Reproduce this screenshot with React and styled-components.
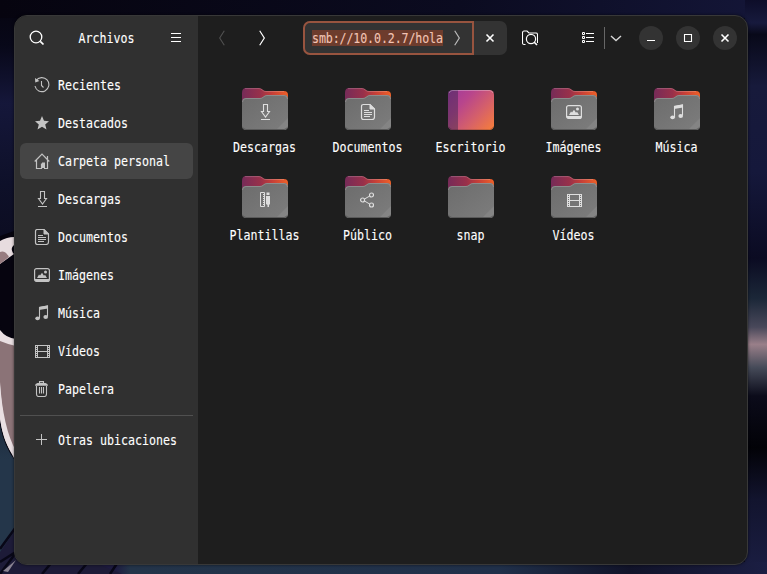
import React from "react";
import styled, { createGlobalStyle } from "styled-components";

const GlobalStyle = createGlobalStyle`
  * { box-sizing: border-box; }
  html, body { margin: 0; height: 100%; overflow: hidden; background: #0b0c20; }
  body, button, input {
    font-family: "DejaVu Sans Mono", "Liberation Mono", monospace;
    font-size: 11.63px;
    color: #fff;
  }
`;

const Desktop = styled.div`
  position: relative;
  width: 767px;
  height: 574px;
  padding: 15px 19px 9px 14px;
  overflow: hidden;
`;

const WallpaperArt = styled.svg`
  position: absolute;
  inset: 0;
  z-index: 0;
`;

const Window = styled.main`
  position: relative;
  z-index: 1;
  display: flex;
  width: 734px;
  height: 550px;
  border: 1px solid #383838;
  border-radius: 13px;
  overflow: hidden;
  background: #1e1e1e;
  box-shadow: 0 0 3px rgba(0, 0, 0, 0.6);
`;

const Sidebar = styled.aside`
  width: 183px;
  flex: none;
  background: #303030;
  padding: 0 5px;
`;

const SidebarHeader = styled.header`
  display: grid;
  grid-template-columns: 34px 1fr 34px;
  align-items: center;
  justify-items: center;
  height: 44px;
  margin-bottom: 7px;
`;

const Text = styled.span`
  display: block;
  line-height: 16px;
  white-space: pre;
  transform: scaleY(1.18);
  color: ${(p) => p.$color || "#fff"};
  letter-spacing: ${(p) => (p.$tight ? "-0.11px" : "0")};
  -webkit-text-stroke: 0.1px currentColor;
`;

const IconButton = styled.button`
  display: flex;
  align-items: center;
  justify-content: center;
  flex: none;
  width: ${(p) => p.$width || 34}px;
  height: 34px;
  margin: 0 0 0 ${(p) => p.$before || 0}px;
  padding: 0;
  border: 0;
  background: none;
`;

const Places = styled.nav`
  display: flex;
  flex-direction: column;
  gap: 2px;
`;

const Place = styled.a`
  display: flex;
  align-items: center;
  gap: 8px;
  height: 36px;
  padding-left: 14px;
  border-radius: 6px;
  background: ${(p) => (p.$active ? "#454545" : "transparent")};
`;

const Divider = styled.hr`
  height: 1px;
  margin: 8px 0 6px;
  border: 0;
  background: #505050;
`;

const Content = styled.section`
  flex: 1;
  min-width: 0;
`;

const Toolbar = styled.header`
  display: flex;
  align-items: center;
  height: 44px;
  padding-left: 7px;
`;

const PathBar = styled.div`
  display: flex;
  width: 204px;
  height: 34px;
  margin-left: 18px;
  flex: none;
  border-radius: 7px;
  background: #333;
`;

const PathEntry = styled.div`
  display: flex;
  align-items: center;
  width: 171px;
  padding-left: 7px;
  border: 2px solid #98543f;
  border-radius: 7px 0 0 7px;
`;

const Selection = styled.div`
  display: flex;
  width: 131px;
  height: 16px;
  flex: none;
  background: #6d3c2d;
`;

const SplitLine = styled.span`
  width: 1px;
  height: 22px;
  background: #676767;
`;

const WindowControls = styled.div`
  display: flex;
  gap: 13px;
  margin-left: 12px;
`;

const Control = styled.button`
  width: 24px;
  height: 24px;
  padding: 0;
  border: 0;
  border-radius: 50%;
  background: #333;
  display: grid;
  place-items: center;
`;

const FileGrid = styled.div`
  display: grid;
  grid-template-columns: repeat(5, 103px);
  grid-auto-rows: 88px;
  padding: 28px 0 0 15px;
`;

const FileItem = styled.figure`
  display: flex;
  flex-direction: column;
  align-items: center;
  gap: 7px;
  margin: 0;
`;

const Glyph = styled.svg`
  display: block;
  flex: none;
  color: ${(p) => p.$color || "#c3c3c3"};
  fill: none;
  stroke: currentColor;
`;

const glyphs = {
  search: (
    <>
      <circle cx="7" cy="7" r="5.8" strokeWidth="1.3" />
      <path d="m11.3 11.3 3.2 3.2" strokeWidth="1.7" />
    </>
  ),
  menu: <path d="M3 3.5h10M3 7.5h10M3 11.5h10" />,
  recent: (
    <>
      <path d="M2 3.8A7 7 0 1 1 1 9M7.5 4v4.5l2 2" strokeWidth="1.1" />
      <path d="m1 1 .3 4.6L5.4 4Z" fill="currentColor" stroke="none" />
    </>
  ),
  star: <path d="m8 1 2 4.8 5 .4-3.8 3.2 1.3 5.2L8 11.8l-4.5 2.8 1.3-5.2L1 6.2l5-.4Z" fill="currentColor" stroke="none" />,
  home: (
    <>
      <path d="M.7 8.5 8 1.2l7.3 7.3M2.5 7v8.5h5v-5M13.5 7v8.5H10M13.5 6V3" strokeWidth="1.2" />
      <path d="M8 9.5h3V15H8Z" fill="currentColor" stroke="none" />
    </>
  ),
  download: <path d="M6.5 .5h4v7h2L8.5 13 4.5 7.5h2ZM4 15.5h9" strokeWidth="1.1" />,
  document: (
    <>
      <path d="M3.5.5H10L14.5 5v8q0 2.5-2.5 2.5H3.5q-2 0-2-2v-11q0-2 2-2Z" strokeWidth="1.2" />
      <path d="M10 .5V5h4.5Z" fill="currentColor" />
      <path d="M4 6.5h5M4 8.5h8M4 10.5h8M4 12.5h6" />
    </>
  ),
  image: (
    <>
      <rect x=".6" y="1.6" width="14.8" height="12.8" rx="2" strokeWidth="1.2" />
      <path d="M1 12h14v1.3q0 1.2-1.3 1.2H2.3Q1 14.5 1 13.3ZM3 11l2-3.5 1 1L8 5.8l2 3 1-1L13 11Z" fill="currentColor" stroke="none" />
      <circle cx="11.5" cy="5" r="1.5" fill="currentColor" stroke="none" />
    </>
  ),
  music: (
    <>
      <path d="M5.5 13V2.5l8-1.5v10.5" strokeWidth="1.1" />
      <path d="M5 2 14 .5v3L5 5Z" fill="currentColor" stroke="none" />
      <ellipse cx="3.6" cy="13.3" rx="2.3" ry="1.9" fill="currentColor" stroke="none" />
      <ellipse cx="11.7" cy="12" rx="2.3" ry="1.9" fill="currentColor" stroke="none" />
    </>
  ),
  video: (
    <>
      <path d="M3.5 2v13M13.5 2v13M1 2.5h15M3 8.5h11M1 14.5h15" />
      <path d="M1.5 2v13M15.5 2v13" />
      <path d="M2.5 4v10M14.5 4v10" strokeDasharray="1 1" />
    </>
  ),
  trash: (
    <>
      <path d="M2.5 5v8q0 2.5 2 2.5h6q2 0 2-2.5V5M5.5 6v6.5M7.5 6v6.5M9.5 6v6.5M5.5 2V.6h4V2" strokeWidth="1.1" />
      <path d="M1 4.8Q1 2.8 3.5 2h8Q14 2.8 14 4.8Z" fill="currentColor" stroke="none" />
    </>
  ),
  plus: <path d="M2 7.5h11M7.5 2v11" />,
  back: <path d="m10.3 .7-4.6 7.3 4.6 7.3" strokeWidth="1.1" />,
  forward: <path d="m5.7 .7 4.6 7.3-4.6 7.3" strokeWidth="1.2" />,
  close: <path d="m4.5 4.5 7 7m0-7-7 7" strokeWidth="1.6" />,
  folderSearch: (
    <>
      <path d="M3.5 14.5H2Q.5 14.5.5 13V3q0-2 1.5-2h3l2 2H14q1.5 0 1.5 1.5V13" strokeWidth="1.1" />
      <circle cx="9" cy="9" r="4.6" strokeWidth="1.2" />
      <path d="m12 12 3 3" strokeWidth="1.6" />
    </>
  ),
  list: (
    <>
      <path d="M2.5 2.5h2v2h-2ZM2.5 6.5h2v2h-2ZM2.5 10.5h2v2h-2Z" />
      <path d="M6 3.5h8M6 7.5h8M6 11.5h8" />
    </>
  ),
  down: <path d="m3 6 5 4.5L13 6" strokeWidth="1.4" />,
  minimize: <path d="M4 10.5h8" />,
  maximize: <path d="M4.5 4.5h7v7h-7Z" strokeWidth="1.1" />,
  template: (
    <>
      <path d="M3.5.5h4v14h-4Z" />
      <path d="M6 2.5h1M6 4.5h1M6 6.5h1M6 8.5h1M6 10.5h1M6 12.5h1" />
      <path d="M9 4h4v8l-1 1v2h-1.5v-2L9 12ZM9.5.5h3V3h-3Z" fill="currentColor" stroke="none" />
    </>
  ),
  share: (
    <>
      <circle cx="2.6" cy="8" r="2" strokeWidth="1.2" />
      <circle cx="11.5" cy="3" r="2" strokeWidth="1.2" />
      <circle cx="11.5" cy="13" r="2" strokeWidth="1.2" />
      <path d="m4.5 7 5.1-2.9M4.5 9l5.1 3" />
    </>
  ),
};

function Icon({ name, color }) {
  return (
    <Glyph width="16" height="16" viewBox="0 0 16 16" $color={color}>
      {glyphs[name]}
    </Glyph>
  );
}

const FolderSvg = styled.svg`
  display: block;
  color: #dedede;
`;

function Folder({ emblem }) {
  return (
    <FolderSvg width="46" height="44" viewBox="0 0 46 44" fill="none">
      <path d="M0 5q0-5 4-5h13q2 0 3.5 1.5T24 3h18q4 0 4 4v16H0Z" fill="url(#folder-back)" />
      <path d="M3 .6h14q2 0 3.5 1.5t3.5 1.4h18" stroke="#fff" strokeOpacity=".2" />
      <path d="M0 14q0-4 4-4h14q2 0 3.5-1.5T25 7h17q4 0 4 4v27q0 4-4 4H4q-4 0-4-4Z" fill="url(#folder-front)" />
      <path d="M46 30v8q0 4-4 4h-8Z" fill="#fff" fillOpacity=".07" />
      <path d="M.5 14q0-3.5 3.5-3.5h14q2 0 3.5-1.5T25 7.5h17q3.5 0 3.5 3.5" stroke="#989898" strokeOpacity=".7" />
      <path d="M1 39.5q.8 2 3 2h38q2.2 0 3-2" stroke="#5a5a5a" />
      {emblem && (
        <g transform="translate(15 16)" stroke="currentColor">
          {glyphs[emblem]}
        </g>
      )}
    </FolderSvg>
  );
}

function DesktopFolder() {
  return (
    <FolderSvg width="46" height="44" viewBox="0 0 46 44" fill="none">
      <rect y="2" width="46" height="40" rx="4.5" fill="url(#desktop-fill)" />
      <path d="M10 2H4.5Q0 2 0 6.5v31Q0 42 4.5 42H10Z" fill="#242040" fillOpacity=".4" />
      <path d="M1 5q1-2.5 3.5-2.5h37Q44 2.5 45 5" stroke="#fff" strokeOpacity=".3" />
      <path d="M1 39q1 2.5 3.5 2.5h37q2.5 0 3.5-2.5" stroke="#000" strokeOpacity=".16" />
    </FolderSvg>
  );
}

function Wallpaper() {
  return (
    <WallpaperArt width="767" height="574" viewBox="0 0 767 574">
      <defs>
        <linearGradient id="sky" x2="0" y2="1">
          <stop stopColor="#06040f" />
          <stop offset=".08" stopColor="#080819" />
          <stop offset=".18" stopColor="#15173a" />
          <stop offset=".32" stopColor="#0e1029" />
          <stop offset=".55" stopColor="#090817" />
          <stop offset=".8" stopColor="#24364a" />
          <stop offset="1" stopColor="#24364a" />
        </linearGradient>
        <linearGradient id="right-glow" x2="0" y2="1">
          <stop stopColor="#0d0d29" />
          <stop offset=".04" stopColor="#171a3d" />
          <stop offset=".06" stopColor="#080919" />
          <stop offset=".15" stopColor="#171a3b" />
          <stop offset=".3" stopColor="#15183b" />
          <stop offset=".45" stopColor="#0b0b22" />
          <stop offset=".52" stopColor="#1b2738" />
          <stop offset=".57" stopColor="#49485a" />
          <stop offset=".6" stopColor="#997f89" />
          <stop offset=".64" stopColor="#464b59" />
          <stop offset=".69" stopColor="#0b0b1a" />
          <stop offset=".78" stopColor="#020207" />
          <stop offset=".87" stopColor="#12142e" />
          <stop offset="1" stopColor="#1b1e43" />
        </linearGradient>
        <linearGradient id="ground">
          <stop stopColor="#1d1b3c" />
          <stop offset=".15" stopColor="#1e1b40" />
          <stop offset=".17" stopColor="#233449" />
          <stop offset=".65" stopColor="#20304a" />
          <stop offset=".82" stopColor="#111329" />
          <stop offset="1" stopColor="#1b1e43" />
        </linearGradient>
        <linearGradient id="top-sky">
          <stop stopColor="#06040f" />
          <stop offset=".6" stopColor="#0b0b20" />
          <stop offset="1" stopColor="#141638" />
        </linearGradient>
        <linearGradient id="folder-back">
          <stop stopColor="#762b58" />
          <stop offset=".4" stopColor="#98304a" />
          <stop offset=".65" stopColor="#c53e38" />
          <stop offset="1" stopColor="#ee6128" />
        </linearGradient>
        <linearGradient id="folder-front" x2="1" y2="1">
          <stop stopColor="#6c6c6c" />
          <stop offset="1" stopColor="#7d7d7d" />
        </linearGradient>
        <linearGradient id="desktop-fill" x1="0" y1=".1" x2="1" y2=".9">
          <stop stopColor="#a43b9a" />
          <stop offset=".3" stopColor="#b8458c" />
          <stop offset=".65" stopColor="#d5606a" />
          <stop offset="1" stopColor="#f37b3f" />
        </linearGradient>
      </defs>
      <path fill="url(#sky)" d="M0 0h300v574H0Z" />
      <path fill="url(#top-sky)" d="M0 0h767v18H0Z" />
      <path fill="url(#right-glow)" d="M745 0h22v574h-22Z" />
      <path fill="url(#ground)" d="M0 562h767v12H0Z" />
      <path fill="#06040f" d="M0 236 14 231V340L0 328Z" />
      <path fill="#e7dcdf" d="M0 241q7-4 14-4v8q-4 3-1 8l1 1-14 10Z" />
      <path fill="#977c80" d="M0 252q5-2 9 5L0 264Z" />
      <path fill="#06040f" d="M0 325q6 12 16 12v125Q4 447 0 425Z" />
      <path fill="#e9dfe2" d="M0 330q6 8 16 9v119Q3 445 0 417Z" />
      <path fill="#8b7377" d="M0 341q7 3 16 5v105Q3 428 0 382Z" />
      <path fill="#e9dfe2" d="M0 385q3 45 14 67v6Q3 440 0 419Z" />
      <path fill="#1d1b38" d="M0 552 16 529 122 574H0Z" />
      <path stroke="#080717" strokeWidth="2.5" d="m0 549 16-22M0 562l22-14M0 574l18-24M42 574l10-12M78 574l10-12M110 574l8-12" />
      <path fill="#898291" d="m3 571 13-11-8 12Z" />
    </WallpaperArt>
  );
}

const places = [
  ["recent", "Recientes"],
  ["star", "Destacados"],
  ["home", "Carpeta personal"],
  ["download", "Descargas"],
  ["document", "Documentos"],
  ["image", "Imágenes"],
  ["music", "Música"],
  ["video", "Vídeos"],
  ["trash", "Papelera"],
];

const files = [
  ["Descargas", "download"],
  ["Documentos", "document"],
  ["Escritorio", "desktop"],
  ["Imágenes", "image"],
  ["Música", "music"],
  ["Plantillas", "template"],
  ["Público", "share"],
  ["snap", null],
  ["Vídeos", "video"],
];

export default function App() {
  return (
    <Desktop>
      <GlobalStyle />
      <Wallpaper />
      <Window>
        <Sidebar>
          <SidebarHeader>
            <Icon name="search" color="#fff" />
            <Text>Archivos</Text>
            <Icon name="menu" color="#fff" />
          </SidebarHeader>
          <Places>
            {places.map(([icon, label]) => (
              <Place key={label} $active={icon === "home"}>
                <Icon name={icon} />
                <Text>{label}</Text>
              </Place>
            ))}
          </Places>
          <Divider />
          <Place>
            <Icon name="plus" />
            <Text>Otras ubicaciones</Text>
          </Place>
        </Sidebar>
        <Content>
          <Toolbar>
            <IconButton aria-label="Atrás" $width={33}><Icon name="back" color="#515151" /></IconButton>
            <IconButton aria-label="Adelante" $width={47}><Icon name="forward" color="#fff" /></IconButton>
            <PathBar>
              <PathEntry>
                <Selection>
                  <Text $color="#f2c4b4" $tight>smb://10.0.2.7/hola</Text>
                </Selection>
                <IconButton aria-label="Ir" $width={28}><Icon name="forward" color="#bababa" /></IconButton>
              </PathEntry>
              <IconButton aria-label="Cerrar ruta" $width={32}><Icon name="close" color="#fff" /></IconButton>
            </PathBar>
            <IconButton aria-label="Buscar" $width={46}><Icon name="folderSearch" color="#fff" /></IconButton>
            <IconButton aria-label="Vista de lista" $width={32} $before={19}><Icon name="list" color="#fff" /></IconButton>
            <SplitLine />
            <IconButton aria-label="Opciones de vista" $width={22}><Icon name="down" color="#d5d5d5" /></IconButton>
            <WindowControls>
              {["minimize", "maximize", "close"].map((name, i) => (
                <Control key={i} aria-label={name}><Icon name={name} color="#fff" /></Control>
              ))}
            </WindowControls>
          </Toolbar>
          <FileGrid>
            {files.map(([label, emblem]) => (
              <FileItem key={label}>
                {emblem === "desktop" ? <DesktopFolder /> : <Folder emblem={emblem} />}
                <Text>{label}</Text>
              </FileItem>
            ))}
          </FileGrid>
        </Content>
      </Window>
    </Desktop>
  );
}
